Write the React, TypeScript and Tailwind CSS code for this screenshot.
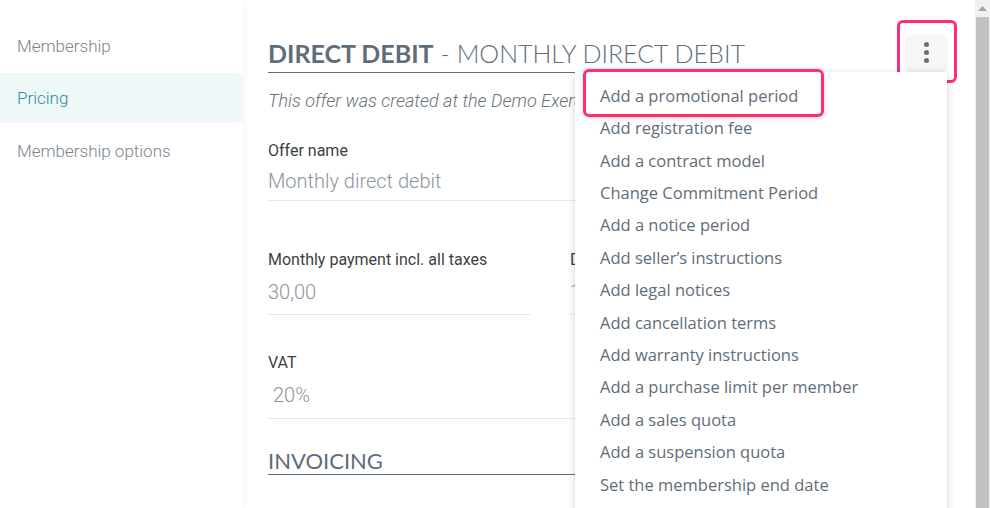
import React from "react";

const menuItems = [
  "Add a promotional period",
  "Add registration fee",
  "Add a contract model",
  "Change Commitment Period",
  "Add a notice period",
  "Add seller\u2019s instructions",
  "Add legal notices",
  "Add cancellation terms",
  "Add warranty instructions",
  "Add a purchase limit per member",
  "Add a sales quota",
  "Add a suspension quota",
  "Set the membership end date",
];

export default function App() {
  return (
    <div className="flex h-[508px] w-[990px] overflow-hidden bg-white" style={{ fontFamily: "Roboto, sans-serif" }}>
      {/* Sidebar */}
      <aside className="relative z-10 w-[243px] shrink-0 bg-white pt-[21px] shadow-[2px_0_6px_rgba(0,0,0,0.04)]">
        <div className="flex h-[52px] items-center pl-[17px] text-[17px] font-light text-[#7b858e]">Membership</div>
        <div className="flex h-[50px] items-center rounded-r-[4px] bg-[#eff8f9] pl-[17px] pt-[2px] text-[17px] font-light text-[#2f8ca0]">Pricing</div>
        <div className="flex h-[58px] items-center pl-[17px] text-[17px] font-light text-[#7b858e]">Membership options</div>
      </aside>

      {/* Main */}
      <main className="relative flex-1 bg-white">
        <div className="flex items-start pl-[25px] pr-[22px] pt-[35px]">
          <div className="flex-1">
            <h1 className="flex h-[38px] items-center border-b border-[#5f6d79] text-[25px] text-[#5f6d79]" style={{ fontFamily: "Lato, sans-serif" }}>
              <span className="font-bold">DIRECT DEBIT</span>
              <span className="ml-[7px] font-light">- MONTHLY DIRECT DEBIT</span>
            </h1>
          </div>
          <div className="ml-[12px] w-[40px]"></div>
        </div>

        <div className="pl-[25px] pr-[70px]">
          <p className="mt-[14px] text-[18px] leading-[27px] italic font-light text-[#67727c]">This offer was created at the Demo Exercise club</p>

          <div className="mt-[25px]">
            <div className="text-[16px] leading-[24px] text-[#3b3f44]">Offer name</div>
            <div className="mt-[4px] h-[34px] border-b border-[#e6e8ea] text-[20px] leading-[28px] font-light text-[#8c959d]">Monthly direct debit</div>
          </div>

          <div className="mt-[47px] flex gap-[39px]">
            <div className="w-[263px]">
              <div className="text-[16px] leading-[24px] text-[#3b3f44]">Monthly payment incl. all taxes</div>
              <div className="mt-[6px] h-[37px] border-b border-[#e6e8ea] text-[20px] leading-[28px] font-light text-[#8c959d]">30,00</div>
            </div>
            <div className="flex-1">
              <div className="text-[16px] leading-[24px] text-[#3b3f44]">Duration</div>
              <div className="mt-[6px] h-[37px] border-b border-[#e6e8ea] text-[20px] leading-[28px] font-light text-[#8c959d]">1</div>
            </div>
          </div>

          <div className="mt-[36px]">
            <div className="text-[16px] leading-[24px] text-[#3b3f44]">VAT</div>
            <div className="mt-[6px] h-[38px] border-b border-[#e6e8ea] pl-[5px] text-[20px] leading-[28px] font-light text-[#8c959d]">20%</div>
          </div>

          <h2 className="mt-[28px] border-b border-[#5f6d79] text-[22px] leading-[27px] text-[#5f6d79]" style={{ fontFamily: "Lato, sans-serif" }}>
            INVOICING
          </h2>
        </div>

        {/* kebab button */}
        <button className="absolute left-[664px] top-[35px] flex h-[35px] w-[39px] flex-col items-center justify-center gap-[3px] rounded-[4px] bg-[#f6f6f6] shadow-[0_1px_3px_rgba(0,0,0,0.12)]">
          <span className="h-[5px] w-[5px] rounded-full bg-[#6b6f73]"></span>
          <span className="h-[5px] w-[5px] rounded-full bg-[#6b6f73]"></span>
          <span className="h-[5px] w-[5px] rounded-full bg-[#6b6f73]"></span>
        </button>
        <div className="pointer-events-none absolute left-[654px] top-[20px] h-[63px] w-[60px] rounded-[6px] border-[3px] border-[#ff2e6d]"></div>

        {/* Dropdown menu */}
        <div className="absolute left-[332px] top-[72px] h-[460px] w-[372px] bg-white pt-[8px] shadow-[0_2px_8px_rgba(0,0,0,0.18)]" style={{ fontFamily: "'Open Sans', sans-serif" }}>
          {menuItems.map((item) => (
            <div key={item} className="flex h-[32.4px] items-center pl-[25px] text-[16.5px] text-[#5f6d79]">
              {item}
            </div>
          ))}
        </div>
        <div className="pointer-events-none absolute left-[340px] top-[69px] h-[48px] w-[241px] rounded-[6px] border-[3px] border-[#ff2e6d] shadow-[0_1px_4px_rgba(0,0,0,0.2)]"></div>
      </main>

      {/* Scrollbar */}
      <div className="flex w-[15px] shrink-0 flex-col bg-[#f1f1f1]">
        <div className="flex h-[17px] items-center justify-center">
          <svg width="9" height="5" viewBox="0 0 9 5"><path d="M0 5 L4.5 0 L9 5 Z" fill="#a3a3a3" /></svg>
        </div>
        <div className="mx-[1px] flex-1 bg-[#c1c1c1]"></div>
      </div>
    </div>
  );
}
